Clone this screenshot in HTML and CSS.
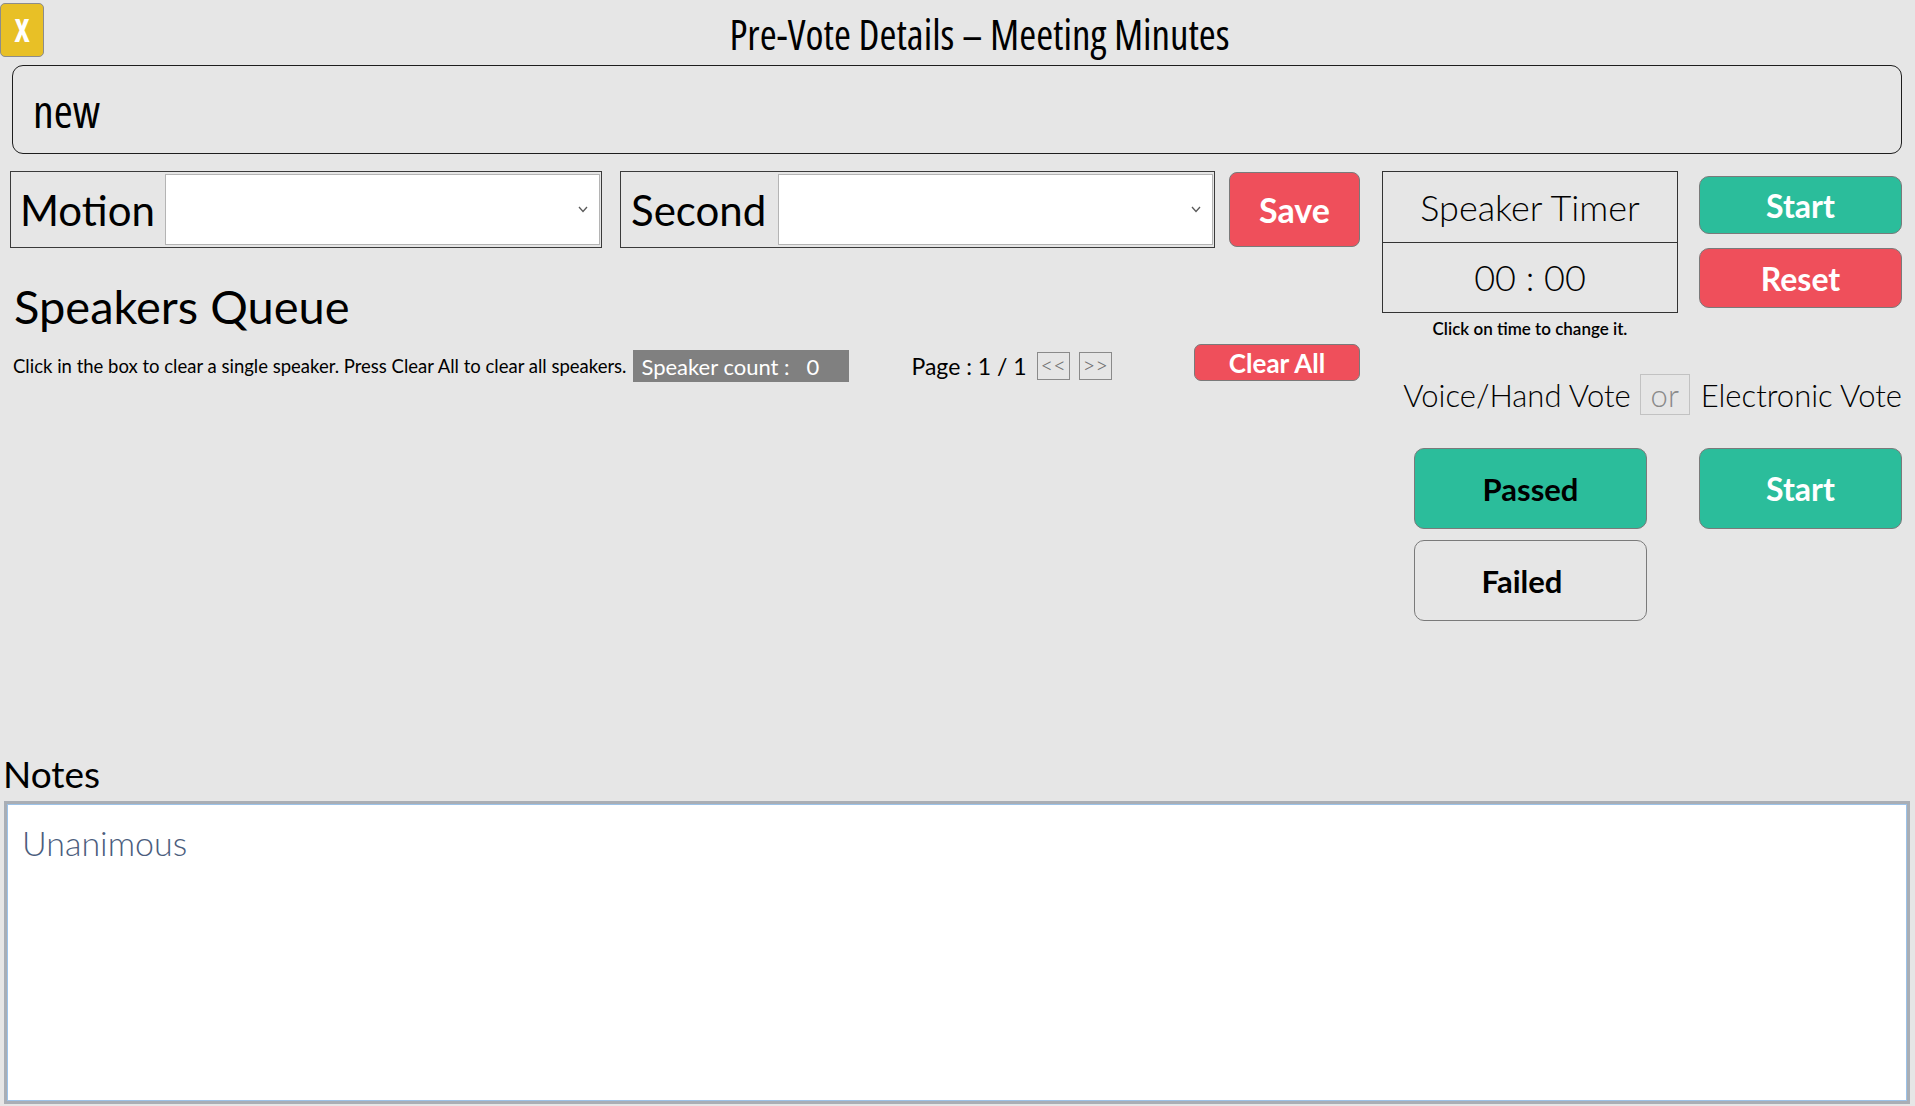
FILE: index.html
```html
<!DOCTYPE html>
<html lang="en">
<head>
<meta charset="utf-8">
<title>Pre-Vote Details – Meeting Minutes</title>
<link rel="stylesheet" href="styles.css">
</head>
<body>
<div class="app">
  <header class="topbar">
    <button class="close">X</button>
    <h1 class="title">Pre-Vote Details – Meeting Minutes</h1>
  </header>

  <div class="name-field">new</div>

  <div class="main">
    <section class="left">
      <div class="motion-row">
        <div class="field field-motion">
          <div class="field-label">Motion</div>
          <div class="select">
            <svg class="chev" width="10" height="7" viewBox="0 0 10 7"><polyline points="1,1 5,5.5 9,1" fill="none" stroke="#5a5a5a" stroke-width="1.3"/></svg>
          </div>
        </div>
        <div class="field field-second">
          <div class="field-label label-second">Second</div>
          <div class="select">
            <svg class="chev" width="10" height="7" viewBox="0 0 10 7"><polyline points="1,1 5,5.5 9,1" fill="none" stroke="#5a5a5a" stroke-width="1.3"/></svg>
          </div>
        </div>
        <button class="btn red save">Save</button>
      </div>

      <h2 class="queue-title">Speakers Queue</h2>

      <div class="queue-bar">
        <span class="hint">Click in the box to clear a single speaker. Press Clear All to clear all speakers.</span>
        <span class="count">Speaker count :   0</span>
        <div class="pager">
          <span class="page-label">Page : 1 / 1</span>
          <button class="page-btn">&lt;&lt;</button>
          <button class="page-btn page-next">&gt;&gt;</button>
        </div>
        <button class="btn red clear-all">Clear All</button>
      </div>
    </section>

    <section class="right">
      <div class="timer-row">
        <div class="timer-col">
          <div class="timer">
            <div class="timer-head">Speaker Timer</div>
            <div class="timer-time">00 : 00</div>
          </div>
          <div class="timer-hint">Click on time to change it.</div>
        </div>
        <div class="timer-btns">
          <button class="btn green btn-start">Start</button>
          <button class="btn red btn-reset">Reset</button>
        </div>
      </div>

      <div class="vote-mode">
        <span>Voice/Hand Vote</span>
        <span class="or">or</span>
        <span>Electronic Vote</span>
      </div>

      <div class="vote-row">
        <div class="outcome">
          <button class="btn green dark-text">Passed</button>
          <button class="btn plain dark-text failed">Failed</button>
        </div>
        <button class="btn green vote-start">Start</button>
      </div>
    </section>
  </div>

  <div class="notes">
    <div class="notes-label">Notes</div>
    <div class="notes-box">Unanimous</div>
  </div>
</div>
</body>
</html>
```
FILE: styles.css
```css
html, body {
  margin: 0;
  padding: 0;
}
body {
  background: #e6e6e6;
  font-family: Lato, "Open Sans", sans-serif;
  color: #000;
}
.app {
  width: 1915px;
  height: 1106px;
  display: flex;
  flex-direction: column;
  overflow: hidden;
}
button {
  font-family: inherit;
  padding: 0;
  cursor: pointer;
}

/* top bar */
.topbar {
  display: flex;
  height: 60px;
}
.close {
  width: 44px;
  height: 54px;
  margin-top: 3px;
  box-sizing: border-box;
  background: #e8c026;
  border: 1px solid #8c8c8c;
  border-radius: 5px;
  color: #fff;
  font-family: "Open Sans", sans-serif;
  font-weight: 700;
  font-size: 32px;
  font-stretch: 75%;
  line-height: 1;
}
.title {
  flex: 1;
  margin: 0;
  padding-top: 6px;
  text-align: center;
  font-family: "Open Sans", sans-serif;
  font-weight: 400;
  font-size: 41px;
  line-height: 56px;
  font-stretch: 75%;
}

/* name */
.name-field {
  margin: 5px 13px 0 12px;
  height: 89px;
  box-sizing: border-box;
  border: 1.5px solid #1e1e1e;
  border-radius: 11px;
  display: flex;
  align-items: center;
  padding-left: 20px;
  font-family: "Open Sans", sans-serif;
  font-size: 46px;
  font-stretch: 75%;
}

/* main */
.main {
  display: flex;
  margin-top: 17px;
  flex: 1;
}
.left {
  margin-left: 10px;
  width: 1350px;
  display: flex;
  flex-direction: column;
}
.motion-row {
  display: flex;
  height: 77px;
}
.field {
  display: flex;
  height: 77px;
  box-sizing: border-box;
  border: 1px solid #3a3a3a;
}
.field-motion { width: 592px; }
.field-second { width: 595px; margin-left: 18px; }
.field-label {
  width: 154px;
  flex-shrink: 0;
  box-sizing: border-box;
  padding-left: 9px;
  display: flex;
  align-items: center;
  font-size: 42px;
  white-space: nowrap;
}
.label-second {
  width: 157px;
  padding-left: 10px;
}
.select {
  flex: 1;
  margin: 2px 1px 2px 0;
  background: #fff;
  border: 1px solid #b4b4b4;
  display: flex;
  align-items: center;
  justify-content: flex-end;
  padding-right: 11px;
}

.btn {
  box-sizing: border-box;
  border: 1.5px solid #7a7a7a;
  border-radius: 10px;
  color: #fff;
  font-weight: 700;
  font-size: 32px;
  white-space: nowrap;
}
.green { background: #2bbd9b; }
.red { background: #ef4f5b; }
.plain { background: transparent; }
.dark-text { color: #000; }

.save {
  width: 131px;
  height: 75px;
  margin: 1px 0 0 14px;
  border-radius: 8px;
  font-size: 34px;
}

.queue-title {
  margin: 28px 0 0 4px;
  font-size: 47px;
  font-weight: 400;
  line-height: 60px;
}
.queue-bar {
  display: flex;
  align-items: center;
  height: 40px;
  margin-top: 8px;
  padding-left: 3px;
  white-space: nowrap;
}
.hint {
  font-size: 18.5px;
  margin-top: 4px;
  flex-shrink: 1;
  overflow: hidden;
}
.count {
  flex-shrink: 0;
  margin: 4px 0 0 7px;
  width: 216px;
  height: 32px;
  box-sizing: border-box;
  padding-left: 8px;
  background: #808080;
  color: #fff;
  font-size: 22px;
  display: flex;
  align-items: center;
  white-space: pre;
}
.pager {
  flex-shrink: 0;
  margin: 4px 0 0 62px;
  display: flex;
  align-items: center;
}
.page-label {
  font-size: 23px;
}
.page-btn {
  width: 33px;
  height: 28px;
  margin-left: 10px;
  box-sizing: border-box;
  border: 1px solid #8a8a8a;
  background: transparent;
  color: #707070;
  font-size: 22px;
  letter-spacing: 0;
  font-weight: 300;
  line-height: 1;
  padding-bottom: 2px;
}
.page-next { margin-left: 9px; }
.clear-all {
  flex-shrink: 0;
  align-self: flex-start;
  margin-left: auto;
  width: 166px;
  height: 37px;
  border-radius: 7px;
  font-size: 26px;
}

/* right column */
.right {
  margin-left: 22px;
  width: 520px;
  display: flex;
  flex-direction: column;
}
.timer-row {
  display: flex;
}
.timer-col {
  width: 296px;
  display: flex;
  flex-direction: column;
  align-items: center;
}
.timer {
  width: 100%;
  height: 142px;
  box-sizing: border-box;
  border: 1px solid #333;
  display: flex;
  flex-direction: column;
}
.timer-head,
.timer-time {
  flex: 1;
  display: flex;
  align-items: center;
  justify-content: center;
  font-size: 36px;
  font-weight: 300;
}
.timer-head {
  border-bottom: 1px solid #333;
}
.timer-hint {
  margin-top: 6px;
  font-size: 17px;
  line-height: 20px;
  font-weight: 600;
  white-space: nowrap;
}
.timer-btns {
  margin-left: 21px;
  width: 203px;
  display: flex;
  flex-direction: column;
}
.btn-start {
  margin-top: 5px;
  height: 58px;
}
.btn-reset {
  margin-top: 14px;
  height: 60px;
}

.vote-mode {
  margin-top: 35px;
  height: 41px;
  display: flex;
  justify-content: flex-end;
  align-items: center;
  font-size: 31px;
  font-weight: 300;
  white-space: nowrap;
}
.vote-mode > * {
  flex-shrink: 0;
}
.or {
  width: 50px;
  height: 41px;
  margin: 0 11px 0 9px;
  box-sizing: border-box;
  border: 1px solid #c2c2c2;
  color: #8a8a8a;
  display: flex;
  align-items: center;
  justify-content: center;
}

.vote-row {
  display: flex;
  margin-top: 33px;
}
.outcome {
  margin-left: 32px;
  width: 233px;
  display: flex;
  flex-direction: column;
  gap: 11px;
}
.outcome .btn {
  height: 81px;
  font-size: 31px;
}
.outcome .failed {
  padding-right: 17px;
}
.vote-start {
  margin-left: auto;
  width: 203px;
  height: 81px;
}

/* notes */
.notes {
  padding-bottom: 2px;
}
.notes-label {
  margin-left: 3px;
  font-size: 37px;
  line-height: 54px;
}
.notes-box {
  margin-left: 4px;
  width: 1906px;
  height: 303px;
  box-sizing: border-box;
  background: #fff;
  border: 3px solid #a9aeb5;
  box-shadow: inset 0 0 0 1px #9cc2e8;
  padding: 12px 15px;
  font-size: 34px;
  line-height: 54px;
  font-weight: 300;
  color: #4b5d7d;
}
```
